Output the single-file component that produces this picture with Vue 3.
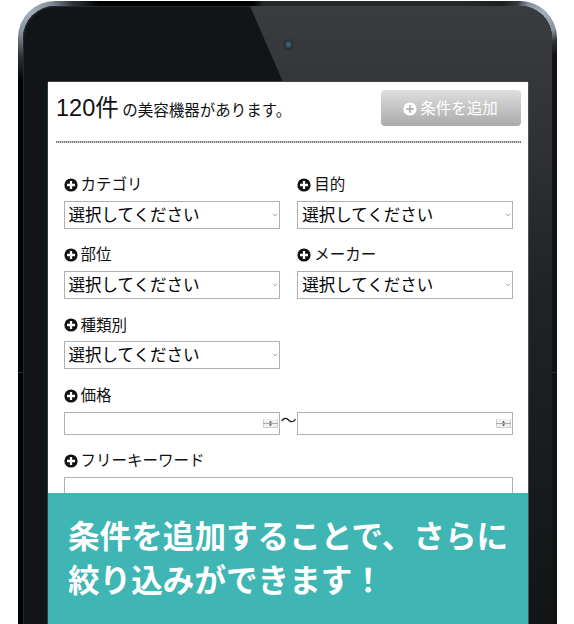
<script setup>
const filters = ['カテゴリ', '目的', '部位', 'メーカー', '種類別']
</script>

<template>
  <div class="stage">
    <div class="device">
      <div class="bezel">
        <div class="gloss"></div>
        <div class="top"><i class="camera"></i></div>
        <div class="screen">
          <header>
            <p class="count"><span class="num">120件</span><span class="rest">の美容機器があります。</span></p>
            <button class="add">
              <svg class="add-icon" viewBox="0 0 14 14"><circle cx="7" cy="7" r="6.6" fill="#fff" /><path d="M7 3.2v7.6M3.2 7h7.6" stroke="#b9b9b9" stroke-width="2.2" /></svg>
              <span>条件を追加</span>
            </button>
          </header>
          <div class="rule"></div>
          <main>
            <div class="grid">
              <div v-for="f in filters" :key="f" class="field">
                <div class="label">
                  <svg class="plus" viewBox="0 0 14 14"><circle cx="7" cy="7" r="6.6" fill="#111" /><path d="M7 3v8M3 7h8" stroke="#fff" stroke-width="2.3" /></svg>
                  <span>{{ f }}</span>
                </div>
                <div class="select">
                  <span>選択してください</span>
                  <svg class="chev" viewBox="0 0 6 4"><path d="M1 .8l2 2 2-2" fill="none" stroke="#999" stroke-width="1" /></svg>
                </div>
              </div>
            </div>
            <div class="field price">
              <div class="label">
                <svg class="plus" viewBox="0 0 14 14"><circle cx="7" cy="7" r="6.6" fill="#111" /><path d="M7 3v8M3 7h8" stroke="#fff" stroke-width="2.3" /></svg>
                <span>価格</span>
              </div>
              <div class="range">
                <template v-for="n in 2" :key="n">
                  <div class="number">
                    <svg class="spin" viewBox="0 0 15 9"><path d="M0 0h15v9H0z" fill="#f0f0f0" /><path d="M.5 0v9M14.5 0v9M0 8.5h15" stroke="#cfcfcf" /><path d="M0 4.5h15" stroke="#aaa" /><path d="M6 3.6L7.5 2 9 3.6zM6 5.4L7.5 7 9 5.4z" fill="#222" /></svg>
                  </div>
                  <span v-if="n === 1" class="tilde">～</span>
                </template>
              </div>
            </div>
            <div class="field">
              <div class="label">
                <svg class="plus" viewBox="0 0 14 14"><circle cx="7" cy="7" r="6.6" fill="#111" /><path d="M7 3v8M3 7h8" stroke="#fff" stroke-width="2.3" /></svg>
                <span>フリーキーワード</span>
              </div>
              <div class="keyword"></div>
            </div>
          </main>
          <div class="banner">条件を追加することで、さらに<br />絞り込みができます！</div>
        </div>
      </div>
    </div>
  </div>
</template>

<style>
body { background: #fff; overflow: hidden; }
</style>

<style scoped>
* { box-sizing: border-box; }
.stage {
  width: 574px;
  height: 624px;
  padding: 1px 17px 0 18px;
  overflow: hidden;
  font-family: "Liberation Sans", "Noto Sans CJK JP", sans-serif;
  color: #111;
}
.device {
  position: relative;
  height: 680px;
  padding: 5px 5px 0;
  border-radius: 37px 37px 0 0;
  background:
    radial-gradient(circle at 14px 14px, #a5b0bd 0, #8993a0 20px, rgba(80, 88, 98, 0.6) 42px, transparent 68px),
    radial-gradient(circle at 525px 14px, #a5b0bd 0, #8993a0 18px, rgba(80, 88, 98, 0.5) 28px, transparent 42px),
    linear-gradient(90deg, #000 0 235px, #252926 245px 450px, #101111);
}
.device::before,
.device::after {
  content: "";
  position: absolute;
  top: 371px;
  width: 5px;
  height: 1px;
  background: #2b2d2e;
}
.device::before { left: 0; }
.device::after { right: 0; }
.bezel {
  position: relative;
  height: 675px;
  padding: 0 24px 0 25px;
  border-radius: 32px 32px 0 0;
  background: #111518;
  overflow: hidden;
  box-shadow: inset 1px 1px 0 #25292c, inset -1px 0 0 #303234;
}
.gloss {
  position: absolute;
  inset: 0;
  background: linear-gradient(180deg, #3a3c40 0, #34363a 75px, #2e3033 150px, #1f2326 290px, #1a1d20 430px, #121416 618px);
  clip-path: polygon(227px 0, 100% 0, 100% 100%, 500px 100%, 260px 76px);
}
.top {
  position: relative;
  display: flex;
  justify-content: center;
  height: 76px;
  padding-top: 33px;
}
.camera {
  width: 11px;
  height: 11px;
  border-radius: 50%;
  background: radial-gradient(circle, #3d6580 0 14%, #34424c 36%, #292c30 58%, #404247 100%);
}
.screen {
  position: relative;
  width: 480px;
  height: 542px;
  background: #fff;
  display: flex;
  flex-direction: column;
  overflow: hidden;
  box-shadow: 0 -1px 0 #414344, -1px 0 0 #23404b, 1px 0 0 #4a5456;
}
header {
  display: flex;
  justify-content: space-between;
  height: 59px;
  padding: 8px 7px 0 8px;
}
.count {
  display: flex;
  align-items: baseline;
  margin: 1px 0 0;
  height: 34px;
  line-height: 34px;
  white-space: nowrap;
}
.num { font-size: 23.5px; }
.rest { margin-left: 3.5px; font-size: 15.5px; }
.add {
  display: flex;
  align-items: center;
  justify-content: center;
  gap: 3px;
  width: 140px;
  height: 36px;
  padding: 0 1px 0 0;
  border: 0;
  border-radius: 4px;
  background: linear-gradient(#dedede, #aaa);
  color: #fff;
  font: 15.5px/34px "Noto Sans CJK JP", sans-serif;
}
.add span { margin-top: -2px; }
.add-icon { width: 14px; height: 14px; margin-top: 2px; }
.rule {
  height: 2px;
  margin: 0 7px 0 8px;
  background: repeating-linear-gradient(90deg, #777 0 1px, #ccc 1px 2px);
}
main { flex: 1; padding: 30.5px 14px 0 15.5px; }
.grid {
  display: grid;
  grid-template-columns: 216px 216px;
  column-gap: 17.8px;
}
.field { height: 70.4px; }
.label {
  display: flex;
  align-items: center;
  gap: 3px;
  height: 22px;
  margin-bottom: 5px;
  font-size: 15.5px;
  line-height: 22px;
}
.label span { margin-top: 1px; }
.plus { width: 14px; height: 14px; }
.select {
  display: flex;
  align-items: center;
  justify-content: space-between;
  width: 216px;
  height: 28px;
  padding: 0 1px 0 4px;
  border: 1px solid #b0b0b0;
  font-size: 16.5px;
  line-height: 26px;
  color: #000;
}
.chev { width: 6px; height: 4px; }
.price { height: 65px; }
.range { display: flex; }
.number {
  display: flex;
  align-items: center;
  justify-content: flex-end;
  width: 216px;
  height: 23px;
  padding-right: 1px;
  border: 1px solid #b0b0b0;
}
.spin { width: 15px; height: 9px; }
.tilde {
  width: 17.8px;
  text-align: center;
  font-size: 16px;
  line-height: 17px;
}
.keyword { width: 449.8px; height: 28px; border: 1px solid #b0b0b0; }
.banner {
  position: absolute;
  left: 0;
  right: 0;
  bottom: 0;
  height: 131px;
  padding: 19px 0 0 20px;
  background: #3fb5b4;
  color: #fff;
  font: 700 31.6px/44px "Noto Sans CJK JP", sans-serif;
  white-space: nowrap;
}
</style>
